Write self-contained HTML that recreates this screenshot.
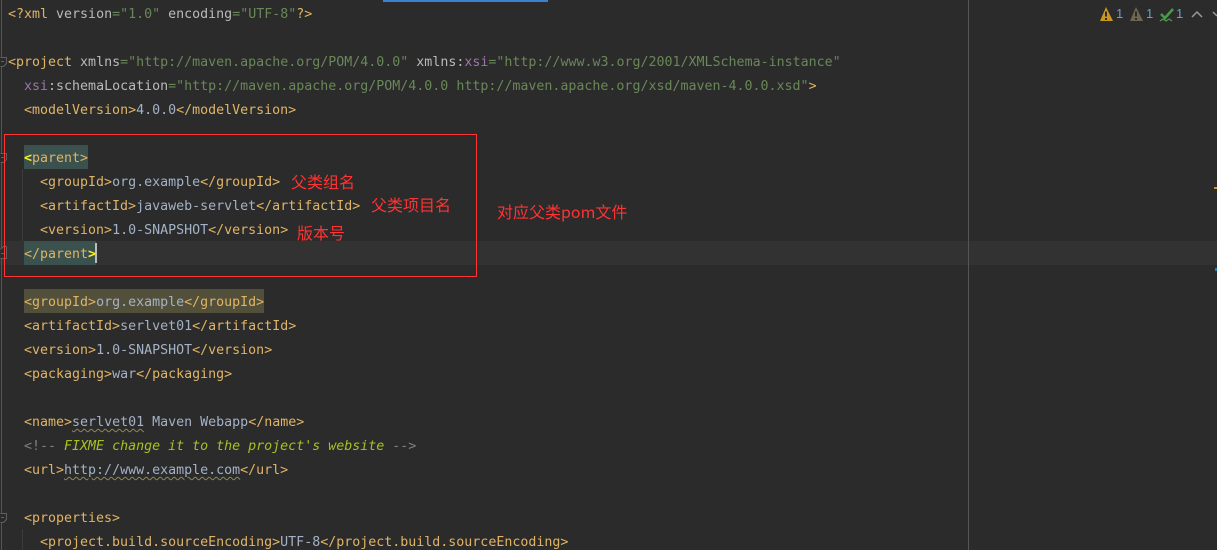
<!DOCTYPE html>
<html><head><meta charset="utf-8">
<style>
html,body{margin:0;padding:0;background:#2b2b2b;}
#p{position:relative;width:1217px;height:550px;overflow:hidden;background:#2b2b2b;font-family:"DejaVu Sans Mono","Liberation Mono",monospace;font-size:13.3px;color:#a3b2c6;}
.r{position:absolute;height:24px;line-height:24px;white-space:pre;margin-top:2px;}
.t{color:#e0b465}.a{color:#bababa}.s{color:#6a8759}.x{color:#9876aa}.c{color:#808080}.f{color:#a8c023;font-style:italic}
.y{color:#ffef1c;font-weight:bold}
.hl{position:absolute;background:#3b514d;height:24px}
.abs{position:absolute}
.cn{position:absolute;color:#ff3333;font-family:"Noto Sans CJK SC","WenQuanYi Zen Hei",sans-serif;font-size:16px;line-height:20px;white-space:pre}
.w{text-decoration:underline wavy #8a8a5a 1px;text-underline-offset:2px}
</style></head><body><div id="p">
<div class="abs" style="left:383px;top:0;width:165px;height:1.5px;background:#3d7fd0"></div>
<div class="abs" style="left:0;top:241px;width:1217px;height:24px;background:#323232"></div>
<div class="abs" style="left:1px;top:0;width:1px;height:550px;background:#555"></div>
<div class="abs" style="left:968px;top:0;width:1px;height:550px;background:#555"></div>
<div class="abs" style="left:22px;top:169px;width:1px;height:72px;background:#3c3c3c"></div>
<div class="abs" style="left:22px;top:529px;width:1px;height:21px;background:#3c3c3c"></div>
<div class="hl" style="left:24px;top:145px;width:64px"></div>
<div class="hl" style="left:24px;top:241px;width:72px"></div>
<div class="hl" style="left:24px;top:289px;width:240px;background:#52503a"></div>
<div class="abs" style="left:95px;top:243px;width:2px;height:20px;background:#bbb"></div>

<svg class="abs" style="left:0;top:0" width="10" height="550" fill="#2b2b2b" stroke="#606060" stroke-width="1">
<path d="M0.5 57.5H6.5V63.5L3.5 66.5H0.5"/><path d="M4 61.5H1"/>
<path d="M0.5 153.5H6.5V159.5L3.5 162.5H0.5"/><path d="M4 157.5H1"/>
<path d="M0.5 249.5L3.5 246.5H6.5V258.5H0.5"/><path d="M4 253.5H1"/>
<path d="M0.5 513.5H6.5V519.5L3.5 522.5H0.5"/><path d="M4 517.5H1"/>
</svg>

<div class="r" style="left:8px;top:1px"><span class="t">&lt;?xml</span><span class="a"> version</span><span class="s">="1.0"</span><span class="a"> encoding</span><span class="s">="UTF-8"</span><span class="t">?&gt;</span></div>
<div class="r" style="left:8px;top:49px"><span class="t">&lt;project</span><span class="a"> xmlns</span><span class="s">="http://maven.apache.org/POM/4.0.0"</span><span class="a"> xmlns</span><span class="a">:</span><span class="x">xsi</span><span class="s">="http://www.w3.org/2001/XMLSchema-instance"</span></div>
<div class="r" style="left:24px;top:73px"><span class="x">xsi</span><span class="a">:schemaLocation</span><span class="s">="http://maven.apache.org/POM/4.0.0 http://maven.apache.org/xsd/maven-4.0.0.xsd"</span><span class="t">&gt;</span></div>
<div class="r" style="left:24px;top:97px"><span class="t">&lt;modelVersion&gt;</span>4.0.0<span class="t">&lt;/modelVersion&gt;</span></div>
<div class="r" style="left:24px;top:145px"><span class="y">&lt;</span><span class="t">parent&gt;</span></div>
<div class="r" style="left:40px;top:169px"><span class="t">&lt;groupId&gt;</span>org.example<span class="t">&lt;/groupId&gt;</span></div>
<div class="r" style="left:40px;top:193px"><span class="t">&lt;artifactId&gt;</span>javaweb-servlet<span class="t">&lt;/artifactId&gt;</span></div>
<div class="r" style="left:40px;top:217px"><span class="t">&lt;version&gt;</span>1.0-SNAPSHOT<span class="t">&lt;/version&gt;</span></div>
<div class="r" style="left:24px;top:241px"><span class="t">&lt;/parent</span><span class="y">&gt;</span></div>
<div class="r" style="left:24px;top:289px"><span class="t">&lt;groupId&gt;</span>org.example<span class="t">&lt;/groupId&gt;</span></div>
<div class="r" style="left:24px;top:313px"><span class="t">&lt;artifactId&gt;</span>serlvet01<span class="t">&lt;/artifactId&gt;</span></div>
<div class="r" style="left:24px;top:337px"><span class="t">&lt;version&gt;</span>1.0-SNAPSHOT<span class="t">&lt;/version&gt;</span></div>
<div class="r" style="left:24px;top:361px"><span class="t">&lt;packaging&gt;</span>war<span class="t">&lt;/packaging&gt;</span></div>
<div class="r" style="left:24px;top:409px"><span class="t">&lt;name&gt;</span><span class="w">serlvet01</span> Maven Webapp<span class="t">&lt;/name&gt;</span></div>
<div class="r" style="left:24px;top:433px"><span class="c">&lt;!-- </span><span class="f">FIXME change it to the project's website</span><span class="c"> --&gt;</span></div>
<div class="r" style="left:24px;top:457px"><span class="t">&lt;url&gt;</span><span class="w">http://www.example.com</span><span class="t">&lt;/url&gt;</span></div>
<div class="r" style="left:24px;top:505px"><span class="t">&lt;properties&gt;</span></div>
<div class="r" style="left:40px;top:529px"><span class="t">&lt;project.build.sourceEncoding&gt;</span>UTF-8<span class="t">&lt;/project.build.sourceEncoding&gt;</span></div>

<div class="abs" style="left:4px;top:134px;width:471px;height:141px;border:1px solid #ff3333"></div>
<div class="cn" style="left:291px;top:171px">父类组名</div>
<div class="cn" style="left:371px;top:194px">父类项目名</div>
<div class="cn" style="left:297px;top:222px">版本号</div>
<div class="cn" style="left:497px;top:201px">对应父类pom文件</div>

<svg class="abs" style="left:1095px;top:3px" width="122" height="22">
<path d="M11 4L18 18H5Z" fill="#c9971c"/><path d="M11 8.5V13.5M11 15V17" stroke="#2b2b2b" stroke-width="2"/>
<path d="M41 4L48 18H35Z" fill="#6e6650"/><path d="M41 8.5V13.5M41 15V17" stroke="#2b2b2b" stroke-width="2"/>
<path d="M66 11L70 15L78 6" fill="none" stroke="#4a9a4a" stroke-width="2.5"/><path d="M65 18L68 16L71 18L74 16L77 18" fill="none" stroke="#4a9a4a" stroke-width="1.3"/>
<path d="M97 14L102 9L107 14" fill="none" stroke="#9a9a9a" stroke-width="1.5"/>
<path d="M118 9L122 13" fill="none" stroke="#9a9a9a" stroke-width="1.5"/>
</svg>
<div class="abs" style="left:1116px;top:5px;font:13px/18px 'Liberation Sans',sans-serif;color:#6e9ecf">1</div>
<div class="abs" style="left:1146px;top:5px;font:13px/18px 'Liberation Sans',sans-serif;color:#6e9ecf">1</div>
<div class="abs" style="left:1176px;top:5px;font:13px/18px 'Liberation Sans',sans-serif;color:#6e9ecf">1</div>
<div class="abs" style="left:1214px;top:187px;width:3px;height:2px;background:#c9971c"></div>
<div class="abs" style="left:1215px;top:268px;width:2px;height:3px;background:#1f7fb8"></div>
</div></body></html>
